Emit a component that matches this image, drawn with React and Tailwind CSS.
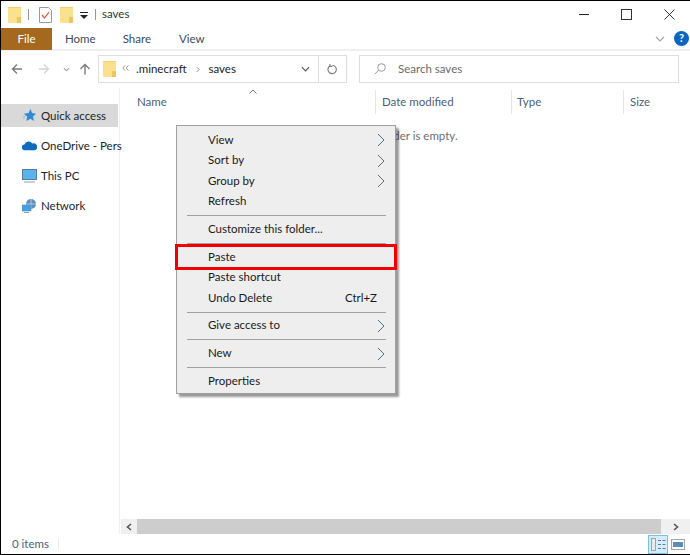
import React from 'react';

const Folder = ({ className = 'w-[13px] h-[16px]' }) => (
  <svg viewBox="0 0 13 16" className={className}>
    <rect x="0" y="0" width="13" height="16" rx="1" fill="#fbe08e" />
    <rect x="9" y="10" width="4" height="6" fill="#eec65f" />
    <path d="M0 .5h13" stroke="#f3cf6d" />
  </svg>
);

const MenuArrow = () => (
  <svg viewBox="0 0 8 14" className="w-[8px] h-[14px]" fill="none" stroke="#5f6b77" strokeWidth="1">
    <path d="M1 1l6 6-6 6" />
  </svg>
);

const MenuRow = ({ label, arrow, shortcut }) => (
  <div className="flex items-center justify-between h-[20.6px] pl-[31px] pr-[10px] text-[#1a1a1a]">
    <span className="mb-[2px]">{label}</span>
    {arrow && <MenuArrow />}
    {shortcut && <span className="pr-[8px] mb-[2px]">{shortcut}</span>}
  </div>
);

const MenuSep = () => <div className="h-px bg-[#a0a0a0] ml-[10px] mr-[9px] my-[3px]" />;

const HeaderCell = ({ label, className }) => (
  <div className={`h-[24px] flex items-center text-[#4c607a] ${className}`}>{label}</div>
);

const SideItem = ({ icon, label, active }) => (
  <div className={`h-[23px] flex items-center gap-[4px] pl-[21px] whitespace-nowrap text-[#20242c] ${active ? 'bg-[#d9d9d9]' : ''}`}>
    <span className="w-[15px] flex justify-center shrink-0">{icon}</span>
    <span>{label}</span>
  </div>
);

export default function App() {
  return (
    <div className="relative w-[690px] h-[555px] bg-white border-l border-t border-b border-black overflow-hidden flex flex-col text-[11.5px] font-['Lato',sans-serif] text-[#222]">
      {/* Title bar */}
      <div className="h-[27px] flex items-center shrink-0">
        <div className="ml-[7px]"><Folder /></div>
        <div className="w-px h-[11px] bg-[#999] ml-[7px]" />
        <svg viewBox="0 0 13 16" className="w-[13px] h-[16px] ml-[10px]" fill="none">
          <path d="M.5.5h9l3 3v12H.5z" fill="#fff" stroke="#9a9a9a" />
          <path d="M3 8l2.5 3L10 5" stroke="#e2572c" strokeWidth="1.2" />
        </svg>
        <div className="ml-[8px]"><Folder /></div>
        <svg viewBox="0 0 8 7" className="w-[8px] h-[7px] ml-[7px] mt-[1px]">
          <path d="M0 0h8v1H0zM0 3h8L4 7z" fill="#222" />
        </svg>
        <div className="w-px h-[11px] bg-[#999] ml-[7px]" />
        <span className="ml-[6px] mb-[1px] text-[#333]">saves</span>
        <div className="ml-auto flex items-center pr-[15px] gap-[32px] mb-[1px]">
          <div className="w-[10px] h-px bg-[#222]" />
          <div className="w-[11px] h-[11px] border border-[#333]" />
          <svg viewBox="0 0 12 12" className="w-[11px] h-[11px]" stroke="#222" strokeWidth="1" fill="none">
            <path d="M.5.5l11 11M11.5.5l-11 11" />
          </svg>
        </div>
      </div>

      {/* Ribbon tabs */}
      <div className="h-[23px] flex items-center shrink-0 border-b-2 border-[#f0f0f0] text-[#3c4a5c]">
        <div className="w-[51px] h-[22px] bg-[#a5681f] text-white flex items-center justify-center">File</div>
        <span className="ml-[13px]">Home</span>
        <span className="ml-[27px]">Share</span>
        <span className="ml-[28px]">View</span>
        <div className="ml-auto flex items-center gap-[9px] pr-[1px]">
          <svg viewBox="0 0 10 6" className="w-[10px] h-[6px]" fill="none" stroke="#a8a8a8" strokeWidth="1.2">
            <path d="M1 1l4 4 4-4" />
          </svg>
          <div className="w-[15px] h-[15px] rounded-full bg-[#0a64c2] text-white text-[11px] font-bold flex items-center justify-center">?</div>
        </div>
      </div>

      {/* Address row */}
      <div className="h-[28px] mt-[4px] flex items-center shrink-0">
        <svg viewBox="0 0 12 12" className="w-[12px] h-[12px] ml-[10px]" fill="none" stroke="#7a7a7a" strokeWidth="1.4">
          <path d="M11 6H1.5M6 1.5L1.5 6 6 10.5" />
        </svg>
        <svg viewBox="0 0 12 12" className="w-[12px] h-[12px] ml-[15px]" fill="none" stroke="#d4d4d4" strokeWidth="1.4">
          <path d="M1 6h9.5M6 1.5L10.5 6 6 10.5" />
        </svg>
        <svg viewBox="0 0 8 5" className="w-[7px] h-[5px] ml-[13px]" fill="none" stroke="#a0a0a0" strokeWidth="1.3">
          <path d="M1 1l3 3 3-3" />
        </svg>
        <svg viewBox="0 0 12 12" className="w-[12px] h-[12px] ml-[9px]" fill="none" stroke="#7a7a7a" strokeWidth="1.4">
          <path d="M6 11.5V1.5M1.5 6L6 1.5 10.5 6" />
        </svg>
        <div className="w-[249px] h-[28px] ml-[7px] border border-[#dedede] flex items-center">
          <div className="ml-[4px]"><Folder /></div>
          <svg viewBox="0 0 7 6" className="w-[7px] h-[6px] ml-[6px] mb-[2px]" fill="none" stroke="#888" strokeWidth=".9">
            <path d="M3 .5L.8 3 3 5.5M6.3.5L4.1 3l2.2 2.5" />
          </svg>
          <span className="ml-[7px]">.minecraft</span>
          <svg viewBox="0 0 5 8" className="w-[4px] h-[7px] ml-[9px]" fill="none" stroke="#777" strokeWidth="1">
            <path d="M1 1l3 3-3 3" />
          </svg>
          <span className="ml-[9px]">saves</span>
          <svg viewBox="0 0 10 6" className="w-[9px] h-[6px] ml-auto mr-[8px]" fill="none" stroke="#555" strokeWidth="1.3">
            <path d="M1 1l4 4 4-4" />
          </svg>
          <div className="w-[28px] h-full border-l border-[#dedede] flex items-center justify-center">
            <svg viewBox="0 0 12 12" className="w-[11px] h-[11px]" fill="none" stroke="#777" strokeWidth="1.2">
              <path d="M3 2.2A4.6 4.6 0 1 0 6 1.4M3.2 0v2.6h2.6" />
            </svg>
          </div>
        </div>
        <div className="w-[320px] h-[28px] ml-[12px] border border-[#dedede] flex items-center text-[#6b6b6b]">
          <svg viewBox="0 0 12 12" className="w-[12px] h-[12px] ml-[14px]" fill="none" stroke="#9a9a9a" strokeWidth="1">
            <circle cx="7.5" cy="4.5" r="3.8" />
            <path d="M4.6 7.2L.8 11.2" />
          </svg>
          <span className="ml-[12px]">Search saves</span>
        </div>
      </div>

      {/* Body */}
      <div className="flex-1 flex min-h-0 mt-[5px]">
        <div className="w-[119px] shrink-0 border-r border-[#f0f0f0] pt-[16px] pr-[1px] flex flex-col gap-[7px]">
          <SideItem
            active
            label="Quick access"
            icon={
              <svg viewBox="0 0 14 14" className="w-[13px] h-[13px]">
                <path d="M8 0l1.8 4.4L14 5l-3.2 3 .9 5L8 10.6 3.6 13l.9-5L1 5l5-.6z" fill="#2f88d8" />
                <path d="M0 8h3M0 10h2" stroke="#8fbde6" />
              </svg>
            }
          />
          <SideItem
            label="OneDrive - Pers"
            icon={
              <svg viewBox="0 0 16 11" className="w-[15px] h-[11px]">
                <path d="M3 10.5a3 3 0 0 1-.4-6A4.6 4.6 0 0 1 11 3.4a3.6 3.6 0 0 1 2.8 7.1z" fill="#0f6cbd" />
              </svg>
            }
          />
          <SideItem
            label="This PC"
            icon={
              <svg viewBox="0 0 15 14" className="w-[15px] h-[14px]">
                <rect x=".5" y=".5" width="14" height="10" fill="#59b4ee" stroke="#5a7f9e" />
                <path d="M2 13h11" stroke="#8aa3b8" />
              </svg>
            }
          />
          <SideItem
            label="Network"
            icon={
              <svg viewBox="0 0 15 14" className="w-[15px] h-[14px]">
                <circle cx="9" cy="5" r="5" fill="#5d8fc0" />
                <path d="M9 0v10M4 5h10" stroke="#cfe3f5" strokeWidth=".7" />
                <rect x="0" y="6" width="9" height="6" fill="#3fa2e6" stroke="#6f8ba3" strokeWidth=".6" />
                <path d="M2 13.5h5" stroke="#8aa3b8" />
              </svg>
            }
          />
        </div>

        <div className="flex-1 flex flex-col min-w-0">
          <div className="flex-1 min-h-0">
            <div className="flex h-[24px] pl-[17px] mt-[2px] relative">
              <HeaderCell label="Name" className="w-[238px]" />
              <HeaderCell label="Date modified" className="w-[136px] border-l border-[#e5e5e5] pl-[6px]" />
              <HeaderCell label="Type" className="w-[112px] border-l border-[#e5e5e5] pl-[5px]" />
              <HeaderCell label="Size" className="flex-1 border-l border-[#e5e5e5] pl-[6px]" />
              <svg viewBox="0 0 8 5" className="absolute left-[129px] top-[-1px] w-[8px] h-[5px]" fill="none" stroke="#777" strokeWidth="1">
                <path d="M.5 4.5L4 1l3.5 3.5" />
              </svg>
            </div>
            <div className="text-center text-[#6d6d6d] mt-[13px] pl-[4px]">This folder is empty.</div>
          </div>

          {/* Horizontal scrollbar */}
          <div className="h-[15px] bg-[#f0f0f0] flex items-center shrink-0 ml-px">
            <div className="w-[16px] flex justify-center">
              <svg viewBox="0 0 6 8" className="w-[6px] h-[8px]" fill="none" stroke="#555" strokeWidth="1.6">
                <path d="M5 1L1.5 4 5 7" />
              </svg>
            </div>
            <div className="flex-1 h-full bg-[#cdcdcd]" />
            <div className="w-[29px] flex justify-center">
              <svg viewBox="0 0 6 8" className="w-[6px] h-[8px]" fill="none" stroke="#555" strokeWidth="1.6">
                <path d="M1 1l3.5 3L1 7" />
              </svg>
            </div>
          </div>
        </div>
      </div>

      {/* Status bar */}
      <div className="h-[20px] flex items-center shrink-0 text-[#4c607a]">
        <span className="ml-[11px]">0 items</span>
        <div className="w-px h-[12px] bg-[#eee] ml-[9px]" />
        <div className="ml-auto flex items-center pr-[4px] gap-[3px]">
          <div className="w-[20px] h-[19px] bg-[#d5ecfa] border border-[#76c2ec] flex items-center justify-center">
            <svg viewBox="0 0 15 13" className="w-[15px] h-[13px]" fill="none">
              <rect x=".5" y=".5" width="4" height="12" fill="#e6ebef" stroke="#a9a38f" />
              <path d="M7 2.5h3M11.5 2.5h3M7 6.5h3M11.5 6.5h3M7 10.5h3M11.5 10.5h3" stroke="#5b7f9c" />
            </svg>
          </div>
          <svg viewBox="0 0 14 11" className="w-[14px] h-[11px] mr-[1px]">
            <rect x=".5" y=".5" width="13" height="10" fill="#fff" stroke="#9aa6b0" />
            <rect x="2" y="3" width="10" height="5" fill="#5b8db5" />
          </svg>
        </div>
      </div>

      {/* Context menu */}
      <div className="absolute left-[175px] top-[124px] w-[220px] h-[269px] bg-[#eeeeee] border border-[#a0a0a0] shadow-[3px_3px_2px_rgba(0,0,0,0.4)] pt-[4px]">
        <MenuRow label="View" arrow />
        <MenuRow label="Sort by" arrow />
        <MenuRow label="Group by" arrow />
        <MenuRow label="Refresh" />
        <MenuSep />
        <MenuRow label="Customize this folder..." />
        <MenuSep />
        <div className="relative">
          <MenuRow label="Paste" />
          <div className="absolute left-[-2px] right-[-2px] top-[-3px] h-[26px] border-[3px] border-[#f00000]" />
        </div>
        <MenuRow label="Paste shortcut" />
        <MenuRow label="Undo Delete" shortcut="Ctrl+Z" />
        <MenuSep />
        <MenuRow label="Give access to" arrow />
        <MenuSep />
        <MenuRow label="New" arrow />
        <MenuSep />
        <MenuRow label="Properties" />
      </div>
    </div>
  );
}
